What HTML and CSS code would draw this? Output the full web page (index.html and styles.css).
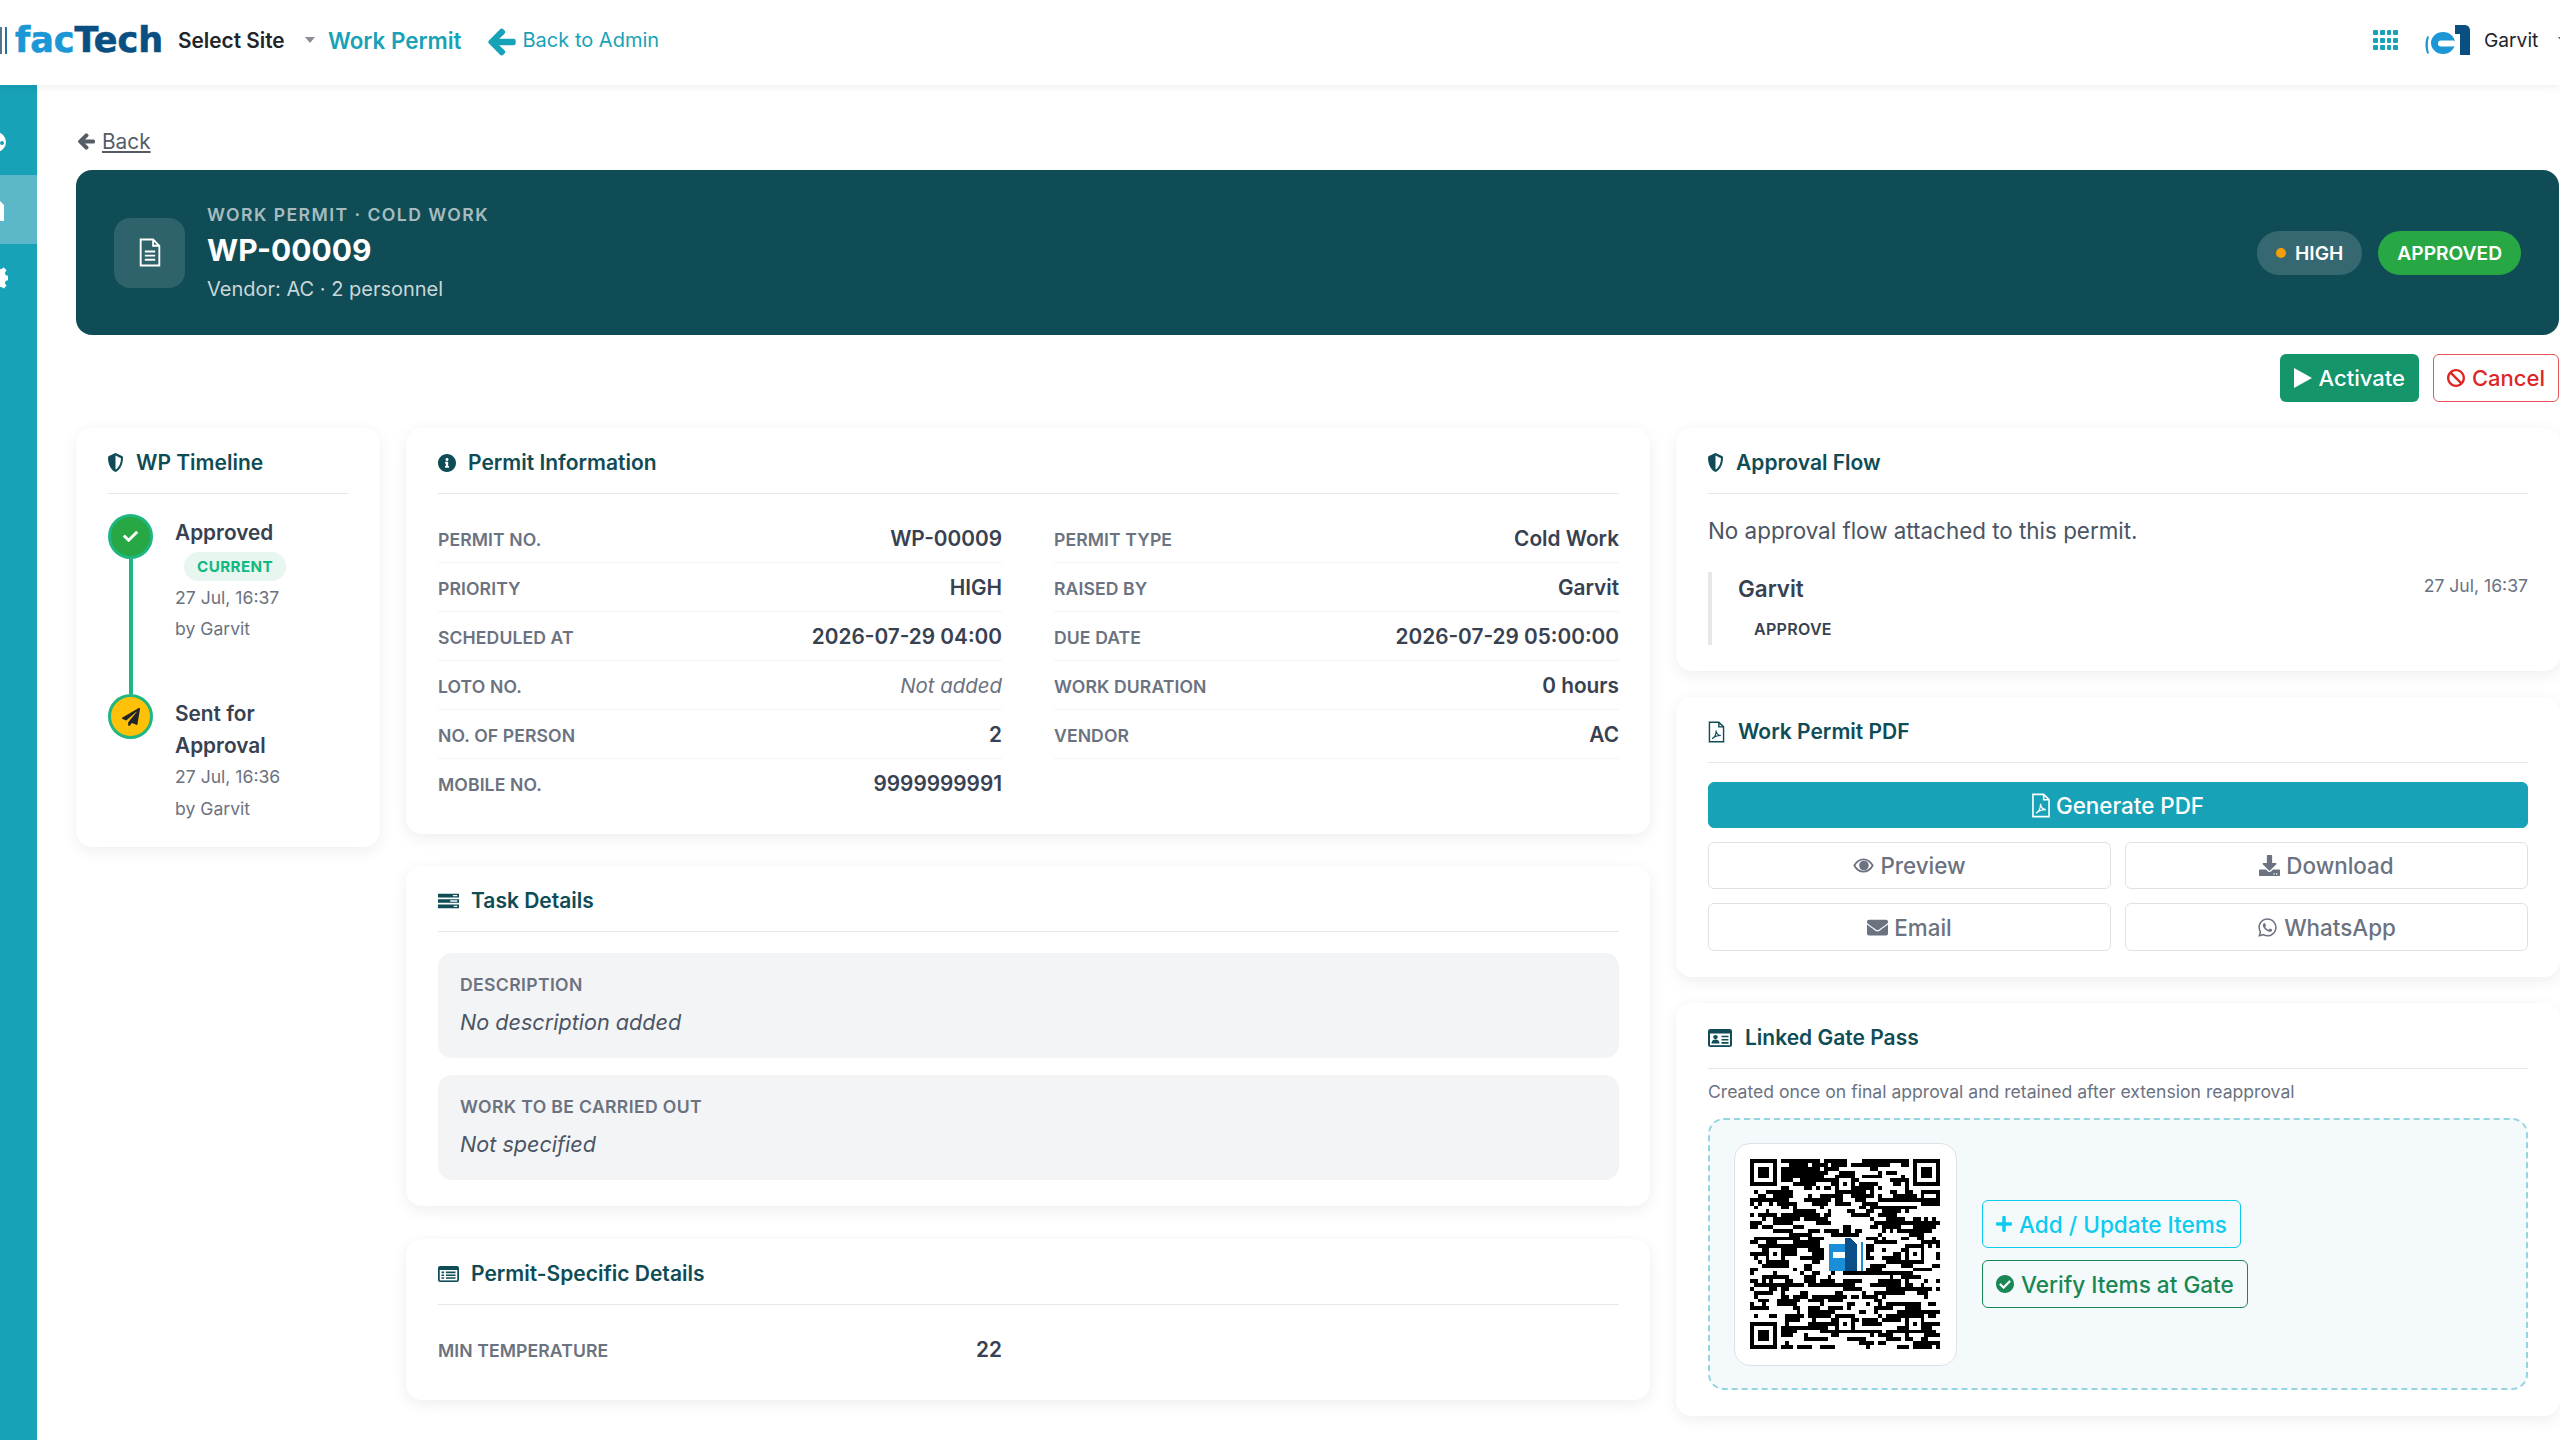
FILE: index.html
```html
<!DOCTYPE html>
<html>
<head>
    <title>Work Permit WP-00009</title>
    <link rel="stylesheet" href="styles.css">
</head>
<body>
    <svg class="sprite" xmlns="http://www.w3.org/2000/svg">
        <symbol id="i-arrow" viewBox="-20 20 488 472" overflow="visible"><path d="M257.5 445.1l-22.2 22.2c-9.4 9.4-24.6 9.4-33.9 0L7 273c-9.4-9.4-9.4-24.6 0-33.9L201.4 44.7c9.4-9.4 24.6-9.4 33.9 0l22.2 22.2c9.5 9.5 9.3 25-.4 34.3L136.6 216H424c13.3 0 24 10.7 24 24v32c0 13.3-10.7 24-24 24H136.6l120.5 114.800c9.800 9.300 10 24.800.4 34.300z"/></symbol>
        <symbol id="i-shield" viewBox="16 0 480 512" preserveAspectRatio="none"><path d="M466.5 83.7l-192-80a48.15 48.15 0 0 0-36.9 0l-192 80C27.7 91.1 16 108.6 16 128c0 198.5 114.5 335.7 221.5 380.3 11.8 4.9 25.1 4.9 36.9 0C360.1 472.6 496 349.3 496 128c0-19.4-11.7-36.9-29.5-44.3zM256.1 446.3l-.1-381 175.9 73.3c-3.3 151.4-82.1 261.1-175.8 307.7z"/></symbol>
        <symbol id="i-info" viewBox="8 8 496 496"><path d="M256 8C119.043 8 8 119.083 8 256c0 136.997 111.043 248 248 248s248-111.003 248-248C504 119.083 392.957 8 256 8zm0 110c23.196 0 42 18.804 42 42s-18.804 42-42 42-42-18.804-42-42 18.804-42 42-42zm56 254c0 6.627-5.373 12-12 12h-88c-6.627 0-12-5.373-12-12v-24c0-6.627 5.373-12 12-12h12v-64h-12c-6.627 0-12-5.373-12-12v-24c0-6.627 5.373-12 12-12h64c6.627 0 12 5.373 12 12v100h12c6.627 0 12 5.373 12 12v24z"/></symbol>
        <symbol id="i-check" viewBox="0 0 512 512"><path d="M173.898 439.404l-166.4-166.4c-9.997-9.997-9.997-26.206 0-36.204l36.203-36.204c9.997-9.998 26.207-9.998 36.204 0L192 312.69 432.095 72.596c9.997-9.997 26.207-9.997 36.204 0l36.203 36.204c9.997 9.997 9.997 26.206 0 36.204l-294.4 294.401c-9.998 9.997-26.207 9.997-36.204-.001z"/></symbol>
        <symbol id="i-check-circle" viewBox="8 8 496 496"><path d="M504 256c0 136.967-111.033 248-248 248S8 392.967 8 256 119.033 8 256 8s248 111.033 248 248zM227.314 387.314l184-184c6.248-6.248 6.248-16.379 0-22.627l-22.627-22.627c-6.248-6.249-16.379-6.249-22.628 0L216 308.118l-69.059-69.059c-6.248-6.248-16.379-6.248-22.628 0l-22.627 22.627c-6.248 6.248-6.248 16.379 0 22.627l104 104c6.249 6.249 16.379 6.249 22.628.001z"/></symbol>
        <symbol id="i-plane" viewBox="0 0 512 512"><path d="M476 3.2L12.5 270.6c-18.1 10.4-15.8 35.6 2.2 43.2L121 358.4l287.3-253.2c5.5-4.9 13.3 2.6 8.6 8.3L176 407v80.5c0 23.6 28.5 32.9 42.5 15.8L282 426l124.6 52.2c14.2 6 30.4-2.9 33-18.2l72-432C515 7.8 493.3-6.8 476 3.2z"/></symbol>
        <symbol id="i-plus" viewBox="0 32 448 448"><path d="M416 208H272V64c0-17.67-14.33-32-32-32h-32c-17.67 0-32 14.33-32 32v144H32c-17.67 0-32 14.33-32 32v32c0 17.67 14.33 32 32 32h144v144c0 17.67 14.33 32 32 32h32c17.67 0 32-14.33 32-32V304h144c17.67 0 32-14.33 32-32v-32c0-17.67-14.33-32-32-32z"/></symbol>
        <symbol id="i-ban" viewBox="8 8 496 496"><path d="M256 8C119.034 8 8 119.033 8 256s111.034 248 248 248 248-111.034 248-248S392.967 8 256 8zm130.108 117.892c65.448 65.448 70 165.481 20.677 235.637L150.47 105.216c70.204-49.356 170.226-44.735 235.638 20.676zM125.892 386.108c-65.448-65.448-70-165.481-20.677-235.637L361.53 406.784c-70.203 49.356-170.226 44.736-235.638-20.676z"/></symbol>
        <symbol id="i-download" viewBox="0 0 512 512"><path d="M216 0h80c13.3 0 24 10.7 24 24v168h87.7c17.8 0 26.7 21.5 14.1 34.1L269.7 378.3c-7.5 7.5-19.8 7.5-27.3 0L90.1 226.1c-12.6-12.6-3.7-34.1 14.1-34.1H192V24c0-13.3 10.7-24 24-24zm296 376v112c0 13.3-10.7 24-24 24H24c-13.3 0-24-10.7-24-24V376c0-13.3 10.7-24 24-24h146.7l49 49c20.1 20.1 52.5 20.1 72.6 0l49-49H488c13.3 0 24 10.7 24 24zm-124 88c0-11-9-20-20-20s-20 9-20 20 9 20 20 20 20-9 20-20zm64 0c0-11-9-20-20-20s-20 9-20 20 9 20 20 20 20-9 20-20z"/></symbol>
        <symbol id="i-envelope" viewBox="0 0 512 512"><path d="M502.3 190.8c3.9-3.1 9.7-.2 9.7 4.7V400c0 26.5-21.5 48-48 48H48c-26.5 0-48-21.5-48-48V195.6c0-5 5.7-7.8 9.7-4.7 22.4 17.4 52.1 39.5 154.1 113.6 21.1 15.4 56.7 47.8 92.2 47.6 35.7.3 72-32.8 92.3-47.6 102-74.1 131.6-96.3 154-113.7zM256 320c23.2.4 56.6-29.2 73.4-41.4 132.7-96.3 142.8-104.7 173.4-128.7 5.8-4.5 9.2-11.5 9.2-18.9v-19c0-26.5-21.5-48-48-48H48C21.5 64 0 85.5 0 112v19c0 7.4 3.4 14.3 9.2 18.9 30.6 23.9 40.7 32.4 173.4 128.7 16.8 12.2 50.2 41.8 73.4 41.4z"/></symbol>
        <symbol id="i-whatsapp" viewBox="0 0 448 512"><path d="M380.9 97.1C339 55.1 283.2 32 223.9 32c-122.4 0-222 99.6-222 222 0 39.1 10.2 77.3 29.6 111L0 480l117.7-30.9c32.4 17.7 68.9 27 106.1 27h.1c122.3 0 224.1-99.6 224.1-222 0-59.3-25.2-115-67.1-157zm-157 341.6c-33.2 0-65.7-8.9-94-25.7l-6.7-4-69.8 18.3L72 359.2l-4.4-7c-18.5-29.4-28.2-63.3-28.2-98.2 0-101.7 82.8-184.5 184.6-184.5 49.3 0 95.6 19.2 130.4 54.1 34.8 34.9 56.2 81.2 56.1 130.5 0 101.8-84.9 184.6-186.6 184.6zm101.2-138.2c-5.5-2.8-32.8-16.2-37.9-18-5.1-1.9-8.8-2.8-12.5 2.8-3.7 5.6-14.3 18-17.6 21.8-3.2 3.7-6.5 4.2-12 1.4-32.6-16.3-54-29.1-75.5-66-5.7-9.8 5.7-9.1 16.3-30.3 1.8-3.7.9-6.9-.5-9.7-1.4-2.8-12.5-30.1-17.1-41.2-4.5-10.8-9.1-9.3-12.5-9.5-3.2-.2-6.9-.2-10.6-.2-3.7 0-9.7 1.4-14.8 6.9-5.1 5.6-19.4 19-19.4 46.3 0 27.3 19.9 53.7 22.6 57.4 2.8 3.7 39.1 59.7 94.8 83.8 35.2 15.2 49 16.5 66.6 13.9 10.7-1.6 32.8-13.4 37.4-26.4 4.6-13 4.6-24.1 3.2-26.4-1.3-2.5-5-3.9-10.5-6.6z"/></symbol>
        <symbol id="i-eye" viewBox="0 0 24 24"><path fill="none" stroke="currentColor" stroke-width="2" d="M1.5 12C4 7.5 7.8 5 12 5s8 2.5 10.500 7c-2.500 4.500-6.300 7-10.500 7s-8-2.500-10.500-7z"/><circle cx="12.500" cy="12" r="5.500"/></symbol>
        <symbol id="i-file-text" viewBox="2 0 20 28"><path fill="none" stroke="currentColor" stroke-width="1.800" d="M3 1.500h12l6 6v19H3zM15 1.500v6h6"/><path fill="none" stroke="currentColor" stroke-width="1.800" d="M7 13h10M7 17h10M7 21h10"/></symbol>
        <symbol id="i-file-pdf" viewBox="2 0 20 28"><path fill="none" stroke="currentColor" stroke-width="1.800" d="M3 1.500h12l6 6v19H3zM15 1.500v6h6"/><path fill="none" stroke="currentColor" stroke-width="1.400" d="M6.500 22.500c3-1.500 5-6 5-10.500 0 4 3 6.500 6 6.500-4 0-8 1-11 4z"/></symbol>
        <symbol id="i-tasks" viewBox="0 0 24 20" preserveAspectRatio="none"><path d="M0 1h24v4.500H0zM0 7.750h24v4.500H0zM0 14.500h24V19H0z"/><path fill="#fff" d="M17 2.400h5v1.700h-5zM14 9.150h8v1.700h-8zM18 15.900h4v1.700h-4z"/></symbol>
        <symbol id="i-list" viewBox="0 0 24 20" preserveAspectRatio="none"><rect width="24" height="20" rx="2.500"/><path fill="#fff" d="M2 5h20v13H2z"/><path d="M4 7h3v2H4zM9 7h11v2H9zM4 10.500h3v2H4zM9 10.500h11v2H9zM4 14h3v2H4zM9 14h11v2H9z"/></symbol>
        <symbol id="i-idcard" viewBox="0 0 24 20" preserveAspectRatio="none"><rect width="24" height="20" rx="2.500"/><path fill="#fff" d="M2 5h20v13H2z"/><circle cx="7.500" cy="9" r="2.300"/><path d="M3.500 16c0-3 1.500-4.300 4-4.300s4 1.300 4 4.300zM13.500 7.500h7v1.800h-7zM13.500 11h7v1.800h-7zM13.500 14.500h7v1.800h-7z"/></symbol>
        <symbol id="i-logo-c" viewBox="0 0 46 30"><path fill="#1b97d6" d="M3.500 11C.8 15 .8 24 3.500 29l1.500-1C3.500 24 3.500 15 5 12z"/><ellipse fill="#1b97d6" cx="19" cy="18" rx="12" ry="11"/><rect fill="#fff" x="14" y="15.500" width="18" height="6" rx="3"/><path fill="#0a4f82" d="M31 0h9c4 0 6 2 6 6v24H36V9h-5z"/></symbol>
    </svg>

    <div class="topbar">
        <div class="logo"><span class="logo-bars"></span><span class="logo-fac">fac</span><span class="logo-tech">Tech</span></div>
        <div class="site-select">Select Site</div>
        <span class="caret"></span>
        <a class="module-name">Work Permit</a>
        <a class="back-admin"><svg class="back-admin-icon"><use href="#i-arrow"/></svg>Back to Admin</a>
        <div class="topbar-right">
            <div class="apps-grid">
                <i></i><i></i><i></i><i></i><i></i><i></i><i></i><i></i><i></i><i></i><i></i><i></i>
            </div>
            <svg class="user-logo"><use href="#i-logo-c"/></svg>
            <span class="user-name">Garvit</span>
            <span class="caret caret-user"></span>
        </div>
    </div>

    <div class="page">
        <div class="sidebar">
            <div class="side-item">
                <svg viewBox="0 0 24 24"><path fill-rule="evenodd" d="M12 2a10 10 0 1 0 0 20 10 10 0 0 0 0-20zm6 9a2 2 0 1 1 0 4 2 2 0 0 1 0-4zM12 5a2 2 0 1 1 0 4 2 2 0 0 1 0-4z"/></svg>
            </div>
            <div class="side-item active">
                <svg viewBox="0 0 24 24"><path d="M4 1h10l6 6v16H4z"/></svg>
            </div>
            <div class="side-item">
                <svg viewBox="0 0 24 24"><path fill-rule="evenodd" d="M10 1h4l.7 3.200 2.300 1 2.800-1.700 2.700 2.700-1.700 2.800 1 2.300 3.200.7v4l-3.200.7-1 2.300 1.700 2.800-2.700 2.700-2.800-1.700-2.300 1L14 27h-4z" transform="translate(0 -2)"/></svg>
            </div>
        </div>

        <div class="main">
            <a class="back-link"><svg><use href="#i-arrow"/></svg><span>Back</span></a>

            <div class="banner">
                <div class="banner-icon"><svg><use href="#i-file-text"/></svg></div>
                <div class="banner-text">
                    <div class="banner-eyebrow">WORK PERMIT · COLD WORK</div>
                    <div class="banner-title">WP-00009</div>
                    <div class="banner-sub">Vendor: AC · 2 personnel</div>
                </div>
                <div class="banner-pills">
                    <span class="pill pill-high"><i class="dot"></i>HIGH</span>
                    <span class="pill pill-approved">APPROVED</span>
                </div>
            </div>

            <div class="actions">
                <button class="btn btn-activate"><svg viewBox="0 0 18 22"><path d="M0 1l18 10L0 21z"/></svg>Activate</button>
                <button class="btn btn-cancel"><svg><use href="#i-ban"/></svg>Cancel</button>
            </div>

            <div class="columns">
                <div class="column">
                    <div class="card card-timeline">
                        <div class="card-title"><svg class="title-icon shield"><use href="#i-shield"/></svg>WP Timeline</div>
                        <div class="timeline">
                            <div class="step">
                                <div class="step-marker">
                                    <div class="step-dot dot-green"><svg><use href="#i-check"/></svg></div>
                                    <div class="step-line"></div>
                                </div>
                                <div class="step-text">
                                    <div class="step-name">Approved</div>
                                    <span class="current-tag">CURRENT</span>
                                    <div class="step-meta">27 Jul, 16:37</div>
                                    <div class="step-meta">by Garvit</div>
                                </div>
                            </div>
                            <div class="step step-last">
                                <div class="step-marker">
                                    <div class="step-dot dot-yellow"><svg><use href="#i-plane"/></svg></div>
                                </div>
                                <div class="step-text">
                                    <div class="step-name">Sent for Approval</div>
                                    <div class="step-meta">27 Jul, 16:36</div>
                                    <div class="step-meta">by Garvit</div>
                                </div>
                            </div>
                        </div>
                    </div>
                </div>

                <div class="column column-mid">
                    <div class="card">
                        <div class="card-title"><svg class="title-icon"><use href="#i-info"/></svg>Permit Information</div>
                        <div class="info-grid">
                            <div class="info-row"><span class="info-label">PERMIT NO.</span><span class="info-value">WP-00009</span></div>
                            <div class="info-row"><span class="info-label">PERMIT TYPE</span><span class="info-value">Cold Work</span></div>
                            <div class="info-row"><span class="info-label">PRIORITY</span><span class="info-value">HIGH</span></div>
                            <div class="info-row"><span class="info-label">RAISED BY</span><span class="info-value">Garvit</span></div>
                            <div class="info-row"><span class="info-label">SCHEDULED AT</span><span class="info-value">2026-07-29 04:00</span></div>
                            <div class="info-row"><span class="info-label">DUE DATE</span><span class="info-value">2026-07-29 05:00:00</span></div>
                            <div class="info-row"><span class="info-label">LOTO NO.</span><span class="info-value muted">Not added</span></div>
                            <div class="info-row"><span class="info-label">WORK DURATION</span><span class="info-value">0 hours</span></div>
                            <div class="info-row"><span class="info-label">NO. OF PERSON</span><span class="info-value">2</span></div>
                            <div class="info-row"><span class="info-label">VENDOR</span><span class="info-value">AC</span></div>
                            <div class="info-row last"><span class="info-label">MOBILE NO.</span><span class="info-value">9999999991</span></div>
                        </div>
                    </div>

                    <div class="card">
                        <div class="card-title"><svg class="title-icon wide"><use href="#i-tasks"/></svg>Task Details</div>
                        <div class="note-list">
                            <div class="note">
                                <div class="note-label">DESCRIPTION</div>
                                <div class="note-value">No description added</div>
                            </div>
                            <div class="note">
                                <div class="note-label">WORK TO BE CARRIED OUT</div>
                                <div class="note-value">Not specified</div>
                            </div>
                        </div>
                    </div>

                    <div class="card card-specific">
                        <div class="card-title"><svg class="title-icon wide"><use href="#i-list"/></svg>Permit-Specific Details</div>
                        <div class="info-grid">
                            <div class="info-row last"><span class="info-label">MIN TEMPERATURE</span><span class="info-value">22</span></div>
                        </div>
                    </div>
                </div>

                <div class="column column-right">
                    <div class="card">
                        <div class="card-title"><svg class="title-icon shield"><use href="#i-shield"/></svg>Approval Flow</div>
                        <p class="flow-empty">No approval flow attached to this permit.</p>
                        <div class="approver">
                            <div class="approver-head">
                                <span class="approver-name">Garvit</span>
                                <span class="approver-date">27 Jul, 16:37</span>
                            </div>
                            <span class="approver-tag">APPROVE</span>
                        </div>
                    </div>

                    <div class="card">
                        <div class="card-title"><svg class="title-icon pdf"><use href="#i-file-pdf"/></svg>Work Permit PDF</div>
                        <div class="pdf-actions">
                            <button class="pdf-btn pdf-main"><svg class="pdf-file"><use href="#i-file-pdf"/></svg>Generate PDF</button>
                            <button class="pdf-btn"><svg><use href="#i-eye"/></svg>Preview</button>
                            <button class="pdf-btn"><svg><use href="#i-download"/></svg>Download</button>
                            <button class="pdf-btn"><svg><use href="#i-envelope"/></svg>Email</button>
                            <button class="pdf-btn"><svg><use href="#i-whatsapp"/></svg>WhatsApp</button>
                        </div>
                    </div>

                    <div class="card">
                        <div class="card-title"><svg class="title-icon idcard"><use href="#i-idcard"/></svg>Linked Gate Pass</div>
                        <div class="gate-caption">Created once on final approval and retained after extension reapproval</div>
                        <div class="gate-box">
                            <div class="qr-card"><svg id="qr" class="qr" viewBox="0 0 49 49" shape-rendering="crispEdges"></svg></div>
                            <div class="gate-actions">
                                <button class="btn btn-info"><svg><use href="#i-plus"/></svg>Add / Update Items</button>
                                <button class="btn btn-verify"><svg><use href="#i-check-circle"/></svg>Verify Items at Gate</button>
                            </div>
                        </div>
                    </div>
                </div>
            </div>
        </div>
    </div>

    <script src="qr.js"></script>
</body>
</html>
```

FILE: styles.css
```css
* {
    box-sizing: border-box;
}
html, body {
    margin: 0;
    height: 100%;
    overflow: hidden;
}
body {
    font-family: Inter, "Liberation Sans", sans-serif;
    color: #374151;
    background: #fff;
}
.sprite {
    display: none;
}
svg {
    fill: currentColor;
    flex-shrink: 0;
}

/* top bar */
.topbar {
    display: flex;
    align-items: center;
    height: 85px;
    padding-bottom: 5px;
    background: #fff;
    box-shadow: 0 2px 8px rgba(0, 0, 0, 0.07);
    position: relative;
}
.logo {
    display: flex;
    align-items: center;
    width: 178px;
    font-family: "DejaVu Sans", sans-serif;
    font-weight: 700;
    font-size: 35px;
    line-height: 1;
    -webkit-text-stroke: 0.6px;
}
.logo-bars {
    width: 7px;
    height: 27px;
    margin-right: 8px;
    border-left: 2px solid #5a7386;
    border-right: 2px solid #2a6f9e;
}
.logo-fac {
    color: #1b97d6;
}
.logo-tech {
    color: #0a4f82;
}
.site-select {
    font-size: 20.8px;
    font-weight: 600;
    color: #212529;
    width: 127px;
}
.caret {
    width: 0;
    height: 0;
    border-left: 5.5px solid transparent;
    border-right: 5.5px solid transparent;
    border-top: 6px solid #8a8f96;
}
.module-name {
    margin-left: 13px;
    font-size: 22.4px;
    font-weight: 600;
    color: #17a2b8;
}
.back-admin {
    display: flex;
    align-items: center;
    margin-left: 26px;
    font-size: 20px;
    color: #17a2b8;
}
.back-admin-icon {
    width: 28px;
    height: 30px;
    margin: 4px 7px 0 0;
    stroke: currentColor;
    stroke-width: 30;
}
.topbar-right {
    display: flex;
    align-items: center;
    margin-left: auto;
}
.apps-grid {
    display: grid;
    grid-template-columns: repeat(4, 4.750px);
    grid-auto-rows: 5px;
    gap: 2.500px 2px;
}
.apps-grid i {
    background: #17a2b8;
    border-radius: 1px;
}
.user-logo {
    width: 46px;
    height: 30px;
    margin-left: 26px;
}
.user-name {
    margin-left: 14px;
    font-size: 19.2px;
    color: #212529;
    width: 74px;
}
.caret-user {
    margin-right: -8px;
    border-top-color: #555c66;
}

/* page frame */
.page {
    display: flex;
    height: calc(100vh - 85px);
}
.sidebar {
    width: 37px;
    background: #17a2b8;
    padding-top: 23px;
    overflow: hidden;
    flex-shrink: 0;
}
.side-item {
    display: flex;
    align-items: center;
    height: 67px;
    color: #fff;
}
.side-item svg {
    width: 24px;
    height: 24px;
    margin-left: -16px;
}
.side-item.active {
    height: 69px;
    background: #5cb8c9;
}
.main {
    flex: 1;
    min-width: 0;
    padding: 40px 1px 0 39px;
}

/* back link */
.back-link {
    display: flex;
    align-items: center;
    gap: 7px;
    height: 32px;
    margin-bottom: 13px;
    padding-left: 2px;
    font-size: 20.8px;
    color: #555c66;
}
.back-link svg {
    width: 17px;
    height: 19px;
    stroke: currentColor;
    stroke-width: 40;
}
.back-link span {
    text-decoration: underline;
}

/* banner */
.banner {
    display: flex;
    align-items: center;
    height: 165px;
    padding: 0 38px;
    background: #0f4c55;
    border-radius: 16px;
    color: #fff;
}
.banner-icon {
    display: flex;
    align-items: center;
    justify-content: center;
    width: 71px;
    height: 70px;
    border-radius: 16px;
    background: rgba(255, 255, 255, 0.13);
}
.banner-icon svg {
    width: 24px;
    height: 29px;
}
.banner-text {
    margin-left: 22px;
}
.banner-eyebrow {
    font-size: 17.6px;
    font-weight: 600;
    letter-spacing: 1.45px;
    line-height: 28px;
    color: rgba(255, 255, 255, 0.65);
}
.banner-title {
    font-size: 30px;
    font-weight: 700;
    line-height: 42px;
}
.banner-sub {
    margin-top: 2px;
    font-size: 20px;
    line-height: 32px;
    color: rgba(255, 255, 255, 0.78);
}
.banner-pills {
    display: flex;
    gap: 16px;
    margin-left: auto;
}
.pill {
    display: flex;
    align-items: center;
    height: 44px;
    padding: 0 19px;
    border-radius: 22px;
    font-size: 19.2px;
    font-weight: 600;
}
.pill-high {
    background: rgba(255, 255, 255, 0.16);
}
.dot {
    width: 10px;
    height: 10px;
    margin-right: 9px;
    border-radius: 50%;
    background: #f59e0b;
}
.pill-approved {
    background: #28a745;
}

/* buttons */
.actions {
    display: flex;
    justify-content: flex-end;
    gap: 14px;
    margin-top: 19px;
}
.btn {
    display: inline-flex;
    align-items: center;
    gap: 7px;
    height: 48px;
    padding: 0 13px;
    border: 1.500px solid transparent;
    border-radius: 6px;
    font-family: inherit;
    font-size: 22px;
    font-weight: 500;
    background: none;
}
.btn svg {
    width: 18px;
    height: 18px;
}
.btn-activate {
    background: #14956a;
    color: #fff;
}
.btn-activate svg {
    width: 18px;
    height: 22px;
}
.btn-info {
    border-color: #0dcaf0;
    color: #0dcaf0;
    font-size: 22.6px;
}
.btn-info svg {
    width: 16px;
    height: 16px;
}
.btn-cancel {
    border-color: #e5555a;
    color: #dc2626;
}
.btn-verify {
    border-color: #198754;
    color: #198754;
    font-size: 22.6px;
}

/* columns and cards */
.columns {
    display: grid;
    grid-template-columns: 304px 1244px 884px;
    gap: 26px;
    margin-top: 26px;
    align-items: start;
}
.column {
    display: flex;
    flex-direction: column;
    gap: 26px;
}
.column-mid {
    gap: 32.500px;
}
.card {
    padding: 19px 32px 26px;
    background: #fff;
    border-radius: 16px;
    box-shadow: 0 4px 16px rgba(0, 0, 0, 0.07);
}
.column-mid .card {
    padding-right: 31px;
}
.card-timeline {
    padding-bottom: 23px;
}
.card-specific {
    margin-top: 1px;
}
.card-title {
    display: flex;
    align-items: center;
    height: 47px;
    padding-bottom: 15px;
    border-bottom: 1.500px solid #e5e7eb;
    font-size: 21px;
    font-weight: 600;
    color: #0f4c55;
}
.title-icon {
    width: 18px;
    height: 18px;
    margin-right: 12px;
}
.title-icon.shield {
    width: 15px;
    height: 19px;
    margin-right: 13px;
}
.title-icon.wide {
    width: 21px;
    height: 16px;
    margin-right: 12px;
}
.title-icon.idcard {
    width: 24px;
    height: 18px;
    margin-right: 13px;
}
.title-icon.pdf {
    width: 17px;
    height: 22px;
    margin-right: 13px;
}

/* timeline */
.timeline {
    margin-top: 20px;
}
.step {
    display: flex;
    gap: 22px;
    height: 180px;
}
.step-last {
    height: auto;
}
.step-marker {
    display: flex;
    flex-direction: column;
    align-items: center;
    width: 45px;
    flex-shrink: 0;
}
.step-dot {
    display: flex;
    align-items: center;
    justify-content: center;
    width: 45px;
    height: 45px;
    border-radius: 50%;
    border: 3px solid #1fb67f;
}
.dot-green {
    background: #28a745;
    color: #fff;
}
.dot-green svg {
    width: 15px;
    height: 15px;
}
.dot-yellow {
    background: #ffc107;
    color: #212529;
}
.dot-yellow svg {
    width: 18px;
    height: 18px;
}
.step-line {
    flex: 1;
    width: 4px;
    background: #1fb67f;
}
.step-text {
    padding-top: 3px;
}
.step-last .step-text {
    padding-top: 4px;
}
.step-name {
    font-size: 20.8px;
    font-weight: 600;
    line-height: 31.500px;
}
.current-tag {
    display: inline-block;
    height: 29px;
    margin: 3px 0 1px 9px;
    padding: 0 13px;
    border-radius: 15px;
    background: #e7f6ef;
    color: #10b981;
    font-size: 15.200px;
    font-weight: 700;
    letter-spacing: 0.4px;
    line-height: 29px;
}
.step-meta {
    font-size: 17.6px;
    line-height: 31.500px;
    color: #6b7280;
}

/* info rows */
.info-grid {
    display: grid;
    grid-template-columns: 564px 565px;
    column-gap: 52px;
    margin-top: 19.500px;
}
.info-row {
    display: flex;
    justify-content: space-between;
    align-items: baseline;
    height: 49px;
    padding-top: 9px;
    border-bottom: 1px solid #f3f4f6;
    line-height: 32px;
}
.info-row.last {
    border-bottom: none;
}
.info-label {
    font-size: 17.6px;
    font-weight: 600;
    letter-spacing: 0.1px;
    color: #6b7280;
}
.info-value {
    font-size: 20.8px;
    font-weight: 600;
    color: #374151;
}
.info-value.muted {
    font-style: italic;
    font-size: 20.4px;
    font-weight: 400;
    color: #6b7280;
}

/* task notes */
.note-list {
    display: flex;
    flex-direction: column;
    gap: 17px;
    margin-top: 20.500px;
}
.note {
    height: 105px;
    padding: 18px 22px;
    border-radius: 14px;
    background: #f3f4f6;
}
.note-label {
    font-size: 17.6px;
    font-weight: 600;
    letter-spacing: 0.35px;
    line-height: 28px;
    color: #6b7280;
}
.note-value {
    margin-top: 7px;
    font-size: 21.6px;
    font-style: italic;
    line-height: 33px;
    color: #4b5563;
}

/* approval flow */
.flow-empty {
    margin: 20px 0 25px;
    font-size: 22.4px;
    line-height: 33px;
    color: #4b5563;
}
.approver {
    height: 73px;
    padding-left: 26px;
    border-left: 4px solid #e5e7eb;
}
.approver-head {
    display: flex;
    justify-content: space-between;
    align-items: flex-start;
    line-height: 34px;
}
.approver-name {
    font-size: 22.4px;
    font-weight: 600;
}
.approver-date {
    padding-top: 2px;
    font-size: 17.6px;
    color: #6b7280;
    line-height: 24px;
}
.approver-tag {
    display: block;
    margin: 11px 0 0 16px;
    font-size: 16px;
    font-weight: 600;
    line-height: 24px;
    letter-spacing: 0.3px;
}

/* pdf actions */
.pdf-actions {
    display: grid;
    grid-template-columns: 1fr 1fr;
    grid-template-rows: 46px 47px 48px;
    gap: 14px 14px;
    margin-top: 19px;
}
.pdf-btn {
    display: flex;
    align-items: center;
    justify-content: center;
    gap: 6px;
    border: 1.500px solid #dee2e6;
    border-radius: 6px;
    background: #fff;
    font-family: inherit;
    font-size: 22.4px;
    font-weight: 500;
    color: #6b7280;
}
.pdf-btn svg {
    width: 21px;
    height: 21px;
}
.pdf-btn svg.pdf-file {
    width: 18px;
    height: 25px;
}
.pdf-main {
    grid-column: span 2;
    border-color: #17a2b8;
    background: #17a2b8;
    color: #fff;
}

/* gate pass */
.gate-caption {
    margin-top: 9px;
    font-size: 17.6px;
    line-height: 28px;
    color: #6b7280;
}
.gate-box {
    display: flex;
    align-items: center;
    gap: 25px;
    height: 272px;
    margin-top: 12px;
    padding: 0 24px;
    border: 2px dashed #93d5e0;
    border-radius: 16px;
    background: #f4fafb;
}
.qr-card {
    width: 223px;
    height: 223px;
    padding: 15px;
    border: 1.500px solid #dee2e6;
    border-radius: 16px;
    background: #fff;
}
.qr {
    display: block;
    width: 190px;
    height: 190px;
    fill: #000;
}
.gate-actions {
    display: flex;
    flex-direction: column;
    align-items: flex-start;
    gap: 12px;
}
```

FILE: qr.js
```js
// draws the gate pass code: finder squares, timing and a seeded fill
var size = 49;
var grid = [];
var seed = 20260729;

function nextBit() {
    seed = (seed * 1103515245 + 12345) & 0x7fffffff;
    return (seed >> 16) & 1;
}

for (var y = 0; y < size; y++) {
    grid[y] = [];
    for (var x = 0; x < size; x++) {
        // copy the left cell half of the time so the fill has runs
        grid[y][x] = x > 0 && nextBit() ? grid[y][x - 1] : nextBit();
    }
}

function finder(fx, fy) {
    for (var y = -1; y < 8; y++) {
        for (var x = -1; x < 8; x++) {
            var gx = fx + x, gy = fy + y;
            if (gx < 0 || gy < 0 || gx >= size || gy >= size) continue;
            var ring = x >= 0 && x < 7 && y >= 0 && y < 7 && (x == 0 || x == 6 || y == 0 || y == 6);
            var core = x >= 2 && x < 5 && y >= 2 && y < 5;
            grid[gy][gx] = ring || core ? 1 : 0;
        }
    }
}

function align(ax, ay) {
    for (var y = -2; y <= 2; y++) {
        for (var x = -2; x <= 2; x++) {
            var edge = Math.abs(x) == 2 || Math.abs(y) == 2;
            grid[ay + y][ax + x] = edge || (x == 0 && y == 0) ? 1 : 0;
        }
    }
}

finder(0, 0);
finder(42, 0);
finder(0, 42);
align(24, 24);
align(6, 24);
align(42, 24);
align(24, 6);
align(24, 42);
align(42, 42);

// space for the logo in the middle
for (var y = 20; y < 29; y++) {
    for (var x = 19; x < 30; x++) {
        grid[y][x] = 0;
    }
}

var d = "";
for (var y = 0; y < size; y++) {
    for (var x = 0; x < size; x++) {
        if (grid[y][x]) d += "M" + x + " " + y + "h1v1h-1z";
    }
}

var qr = document.getElementById("qr");
var ns = "http://www.w3.org/2000/svg";

function add(tag, attrs) {
    var el = document.createElementNS(ns, tag);
    for (var key in attrs) el.setAttribute(key, attrs[key]);
    qr.appendChild(el);
}

add("path", { d: d });
add("path", { d: "M20.500 22h4v2h-3v1.500h3V29h-4z", fill: "#1a8fd8" });
add("path", { d: "M24.500 20.500h1.500l1.500 1.500v7h-3z", fill: "#0b4f88" });
add("path", { d: "M28.500 21.500h.6V29h-.6z", fill: "#1a8fd8" });
```
